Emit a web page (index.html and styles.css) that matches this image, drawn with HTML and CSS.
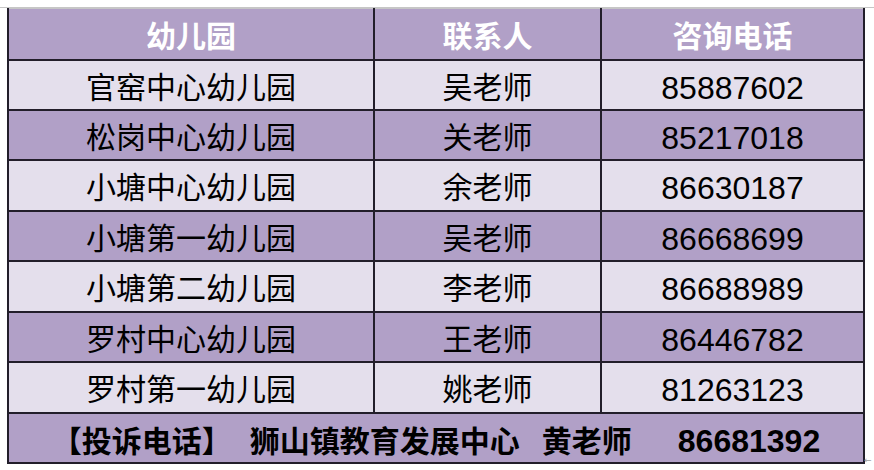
FILE: index.html
```html
<!DOCTYPE html>
<html lang="zh-CN">
<head>
<meta charset="utf-8">
<title>幼儿园咨询电话</title>
<link rel="stylesheet" href="styles.css">
</head>
<body>
<div class="page">
  <table class="sheet">
    <colgroup>
      <col class="c1"><col class="c2"><col class="c3">
    </colgroup>
    <thead>
      <tr class="dark head">
        <th>幼儿园</th><th>联系人</th><th>咨询电话</th>
      </tr>
    </thead>
    <tbody>
      <tr class="light"><td>官窑中心幼儿园</td><td>吴老师</td><td class="num">85887602</td></tr>
      <tr class="dark"><td>松岗中心幼儿园</td><td>关老师</td><td class="num">85217018</td></tr>
      <tr class="light tall"><td>小塘中心幼儿园</td><td>余老师</td><td class="num">86630187</td></tr>
      <tr class="dark"><td>小塘第一幼儿园</td><td>吴老师</td><td class="num">86668699</td></tr>
      <tr class="light tall"><td>小塘第二幼儿园</td><td>李老师</td><td class="num">86688989</td></tr>
      <tr class="dark"><td>罗村中心幼儿园</td><td>王老师</td><td class="num">86446782</td></tr>
      <tr class="light tall"><td>罗村第一幼儿园</td><td>姚老师</td><td class="num">81263123</td></tr>
      <tr class="dark foot">
        <td colspan="3">
          <div class="foot-line">
            <span>【投诉电话】</span>
            <span class="gap0">狮山镇教育发展中心</span>
            <span class="gap1">黄老师</span>
            <span class="gap2 num">86681392</span>
          </div>
        </td>
      </tr>
    </tbody>
  </table>
  <span class="arrow">←</span>
</div>
</body>
</html>
```
FILE: styles.css
```css
html, body {
  margin: 0;
  padding: 0;
  background: #ffffff;
}
.page {
  position: relative;
  width: 874px;
  height: 470px;
  padding-top: 8px;
  box-sizing: border-box;
}
.page::before {
  content: "";
  display: block;
  height: 1px;
  background: #c6c6c6;
  margin-top: -1px;
}
.sheet {
  margin-left: 7px;
  border-collapse: collapse;
  table-layout: fixed;
  width: 856px;
  font-family: "Liberation Sans", "Noto Sans CJK SC", sans-serif;
  font-size: 30px;
  color: #000;
}
.c1 { width: 366px; }
.c2 { width: 227px; }
.c3 { width: 263px; }
.sheet th, .sheet td {
  border: 2px solid #221e2a;
  height: 50px;
  padding: 6px 0 0 0;
  box-sizing: border-box;
  text-align: center;
  vertical-align: middle;
  line-height: 36px;
  white-space: nowrap;
}
.head th {
  border-top: 1px solid #c6c6c6;
  color: #ffffff;
  font-weight: bold;
  height: 51px;
}
.tall td { height: 51px; }
.dark { background: #b1a0c7; }
.light { background: #e4dfec; }
.num {
  font-size: 32px;
}
.foot td {
  font-weight: bold;
  padding-top: 8px;
}
.foot-line {
  display: flex;
  justify-content: center;
  align-items: baseline;
}
.gap0 { margin-left: 18px; }
.gap1 { margin-left: 22px; }
.gap2 { margin-left: 46px; }
.arrow {
  position: absolute;
  left: 864px;
  top: 455px;
  font-family: "DejaVu Sans", sans-serif;
  font-size: 9px;
  color: #a0a0a0;
}
```
